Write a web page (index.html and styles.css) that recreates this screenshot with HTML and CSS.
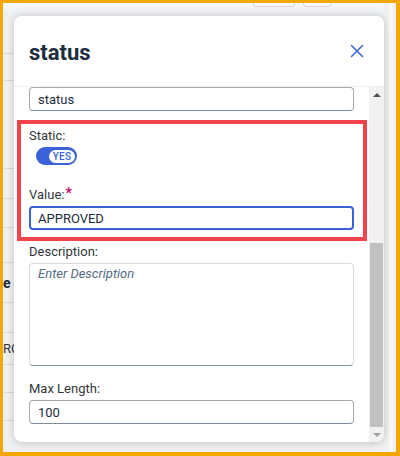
FILE: index.html
```html
<!DOCTYPE html>
<html lang="en">
<head>
<meta charset="utf-8">
<title>status</title>
<link rel="stylesheet" href="styles.css">
</head>
<body>
<div class="frame">
  <div class="page">
    <div class="page-main">
      <div class="topbar">
        <span class="tb-btn tb-btn-a"></span>
        <span class="tb-btn tb-btn-b"></span>
      </div>
      <div class="rows">
        <div class="row r1"></div>
        <div class="row r2"></div>
        <div class="row r3"></div>
        <div class="row r4"></div>
        <div class="row r5"></div>
        <div class="row r6"></div>
        <div class="row r7"><span class="cell-head">e</span></div>
        <div class="row r8"></div>
        <div class="row r9"><span class="cell">RC</span></div>
        <div class="row r10"></div>
        <div class="row r11"></div>
      </div>
    </div>
    <div class="page-side"><span class="side-stripe"></span></div>
  </div>

  <div class="modal">
    <div class="modal-header">
      <h2 class="modal-title">status</h2>
      <button class="close-btn" aria-label="Close">
        <svg width="14" height="14" viewBox="0 0 14 14"><path d="M1.5 1.5 L12.5 12.5 M12.5 1.5 L1.5 12.5" stroke="#3b62d9" stroke-width="1.5" fill="none" stroke-linecap="round"/></svg>
      </button>
    </div>
    <div class="modal-body">
      <div class="form">
        <input class="field field-first" type="text" value="status">
        <div class="highlight">
          <div class="label">Static:</div>
          <div class="toggle"><span class="toggle-knob">YES</span></div>
          <div class="label label-value">Value:<span class="req">*</span></div>
          <input class="field field-focus" type="text" value="APPROVED">
        </div>
        <div class="label label-desc">Description:</div>
        <textarea class="area" placeholder="Enter Description"></textarea>
        <div class="label label-max">Max Length:</div>
        <input class="field" type="text" value="100">
      </div>
      <div class="scrollbar">
        <div class="sb-btn"><span class="tri-up"></span></div>
        <div class="sb-track"></div>
        <div class="sb-thumb"></div>
        <div class="sb-btn"><span class="tri-down"></span></div>
      </div>
    </div>
  </div>
</div>
</body>
</html>
```

FILE: styles.css
```css
* { box-sizing: border-box; }

html, body {
  margin: 0;
  padding: 0;
  background: #ffffff;
}

body {
  font-family: Roboto, "Liberation Sans", Arial, sans-serif;
  color: #32363a;
}

.frame {
  position: relative;
  width: 400px;
  height: 456px;
  border-style: solid;
  border-color: #f4a700;
  border-width: 3px 4px 4px 3px;
  overflow: hidden;
  background: #eef0f2;
}

/* background page */
.page {
  display: flex;
  height: 100%;
}

.page-main {
  flex: 1;
  display: flex;
  flex-direction: column;
}

.topbar {
  height: 13px;
  background: linear-gradient(#f7f8f9, #eceef0);
  display: flex;
  padding-left: 250px;
  gap: 8px;
}

.tb-btn {
  display: block;
  height: 4px;
  border: 1px solid #cfd3d7;
  border-top: none;
  border-radius: 0 0 7px 7px;
  background: #ffffff;
}
.tb-btn-a { width: 42px; }
.tb-btn-b { width: 29px; }

.rows {
  display: flex;
  flex-direction: column;
}

.row {
  border-bottom: 1px solid #d7dadd;
  display: flex;
  align-items: center;
  font-size: 13px;
}
.r1 { height: 38px; }
.r2 { height: 27px; }
.r3 { height: 88px; }
.r4 { height: 30px; }
.r5 { height: 29px; }
.r6 { height: 35px; }
.r7 { height: 40px; }
.r8 { height: 30px; }
.r9 { height: 32px; }
.r10 { height: 28px; }
.r11 { height: 28px; }

.cell-head {
  font-weight: 700;
  font-size: 14px;
  color: #1d2d3e;
}
.cell {
  font-size: 13px;
  color: #32363a;
}

.page-side {
  width: 12px;
  display: flex;
  justify-content: center;
  padding-left: 2px;
}
.side-stripe {
  width: 4px;
  background: #f8f8f9;
}

/* modal (overlay) */
.modal {
  position: absolute;
  left: 11px;
  top: 13px;
  width: 370px;
  height: 426px;
  background: #ffffff;
  border-radius: 8px;
  box-shadow: 0 0 10px rgba(0, 0, 0, 0.14), 0 2px 6px rgba(0, 0, 0, 0.06);
  display: flex;
  flex-direction: column;
  overflow: hidden;
}

.modal-header {
  height: 70px;
  flex: none;
  display: flex;
  align-items: center;
  justify-content: space-between;
  padding: 3px 20px 0 15px;
}

.modal-title {
  margin: 0;
  font-size: 22px;
  line-height: 26px;
  font-weight: 700;
  color: #1d2d3e;
}

.close-btn {
  border: none;
  background: none;
  padding: 0;
  width: 14px;
  height: 14px;
  margin-top: -4px;
  display: flex;
}

.modal-body {
  flex: 1;
  display: flex;
  border-top: 1px solid #eceef0;
  min-height: 0;
}

.form {
  flex: 1;
  display: flex;
  flex-direction: column;
  align-items: stretch;
  padding: 0 15px 0 15px;
}

.field {
  display: block;
  width: 100%;
  height: 24px;
  margin: 3px 0 0 0;
  padding: 0 8px;
  border: 1px solid #a4abb3;
  border-bottom-color: #7f8d9b;
  border-radius: 4px;
  background: #ffffff;
  font-family: Roboto, "Liberation Sans", Arial, sans-serif;
  font-size: 13px;
  color: #1d2d3e;
  outline: none;
}

.field-first { margin-top: 0; }

.field-focus {
  border: 2px solid #3b62d9;
  padding: 0 7px;
}

.highlight {
  margin: 9px -13px 0 -12px;
  padding: 4px 9px 7px 8px;
  border: 4px solid #f0434b;
  display: flex;
  flex-direction: column;
}

.label {
  font-size: 13px;
  line-height: 16px;
  color: #32363a;
}

.label-value { margin-top: 21px; }
.label-desc { margin-top: 3px; }
.label-max { margin-top: 15px; }

.req {
  color: #ba066c;
  font-weight: 700;
  font-size: 14px;
  margin-left: 1px;
  position: relative;
  top: -1px;
}

.toggle {
  margin: 3px 0 0 7px;
  width: 41px;
  height: 18px;
  border-radius: 9px;
  background: #3b62d9;
  display: flex;
  align-items: center;
  justify-content: flex-end;
  padding-right: 2px;
}

.toggle-knob {
  width: 26px;
  height: 13px;
  border-radius: 7px;
  background: #ffffff;
  color: #3b62d9;
  font-size: 10px;
  line-height: 13px;
  font-weight: 500;
  text-align: center;
  letter-spacing: 0.2px;
}

.area {
  display: block;
  width: 100%;
  height: 103px;
  margin-top: 3px;
  padding: 2px 8px;
  border: 1px solid #d7dbe0;
  border-bottom-color: #8396aa;
  border-radius: 4px;
  resize: none;
  font-family: Roboto, "Liberation Sans", Arial, sans-serif;
  font-size: 13px;
  line-height: 16px;
  outline: none;
}

.area::placeholder {
  color: #556b82;
  font-style: italic;
}

/* drawn scrollbar */
.scrollbar {
  width: 15px;
  flex: none;
  background: #f1f1f1;
  display: flex;
  flex-direction: column;
}

.sb-btn {
  height: 15px;
  flex: none;
  display: flex;
  align-items: center;
  justify-content: center;
}

.tri-up {
  width: 0;
  height: 0;
  border-left: 4px solid transparent;
  border-right: 4px solid transparent;
  border-bottom: 4px solid #505050;
}

.tri-down {
  width: 0;
  height: 0;
  border-left: 4px solid transparent;
  border-right: 4px solid transparent;
  border-top: 4px solid #a3a3a3;
}

.sb-track {
  height: 141px;
  flex: none;
}

.sb-thumb {
  flex: 1;
  margin: 0 1px;
  background: #c1c1c1;
}
```
